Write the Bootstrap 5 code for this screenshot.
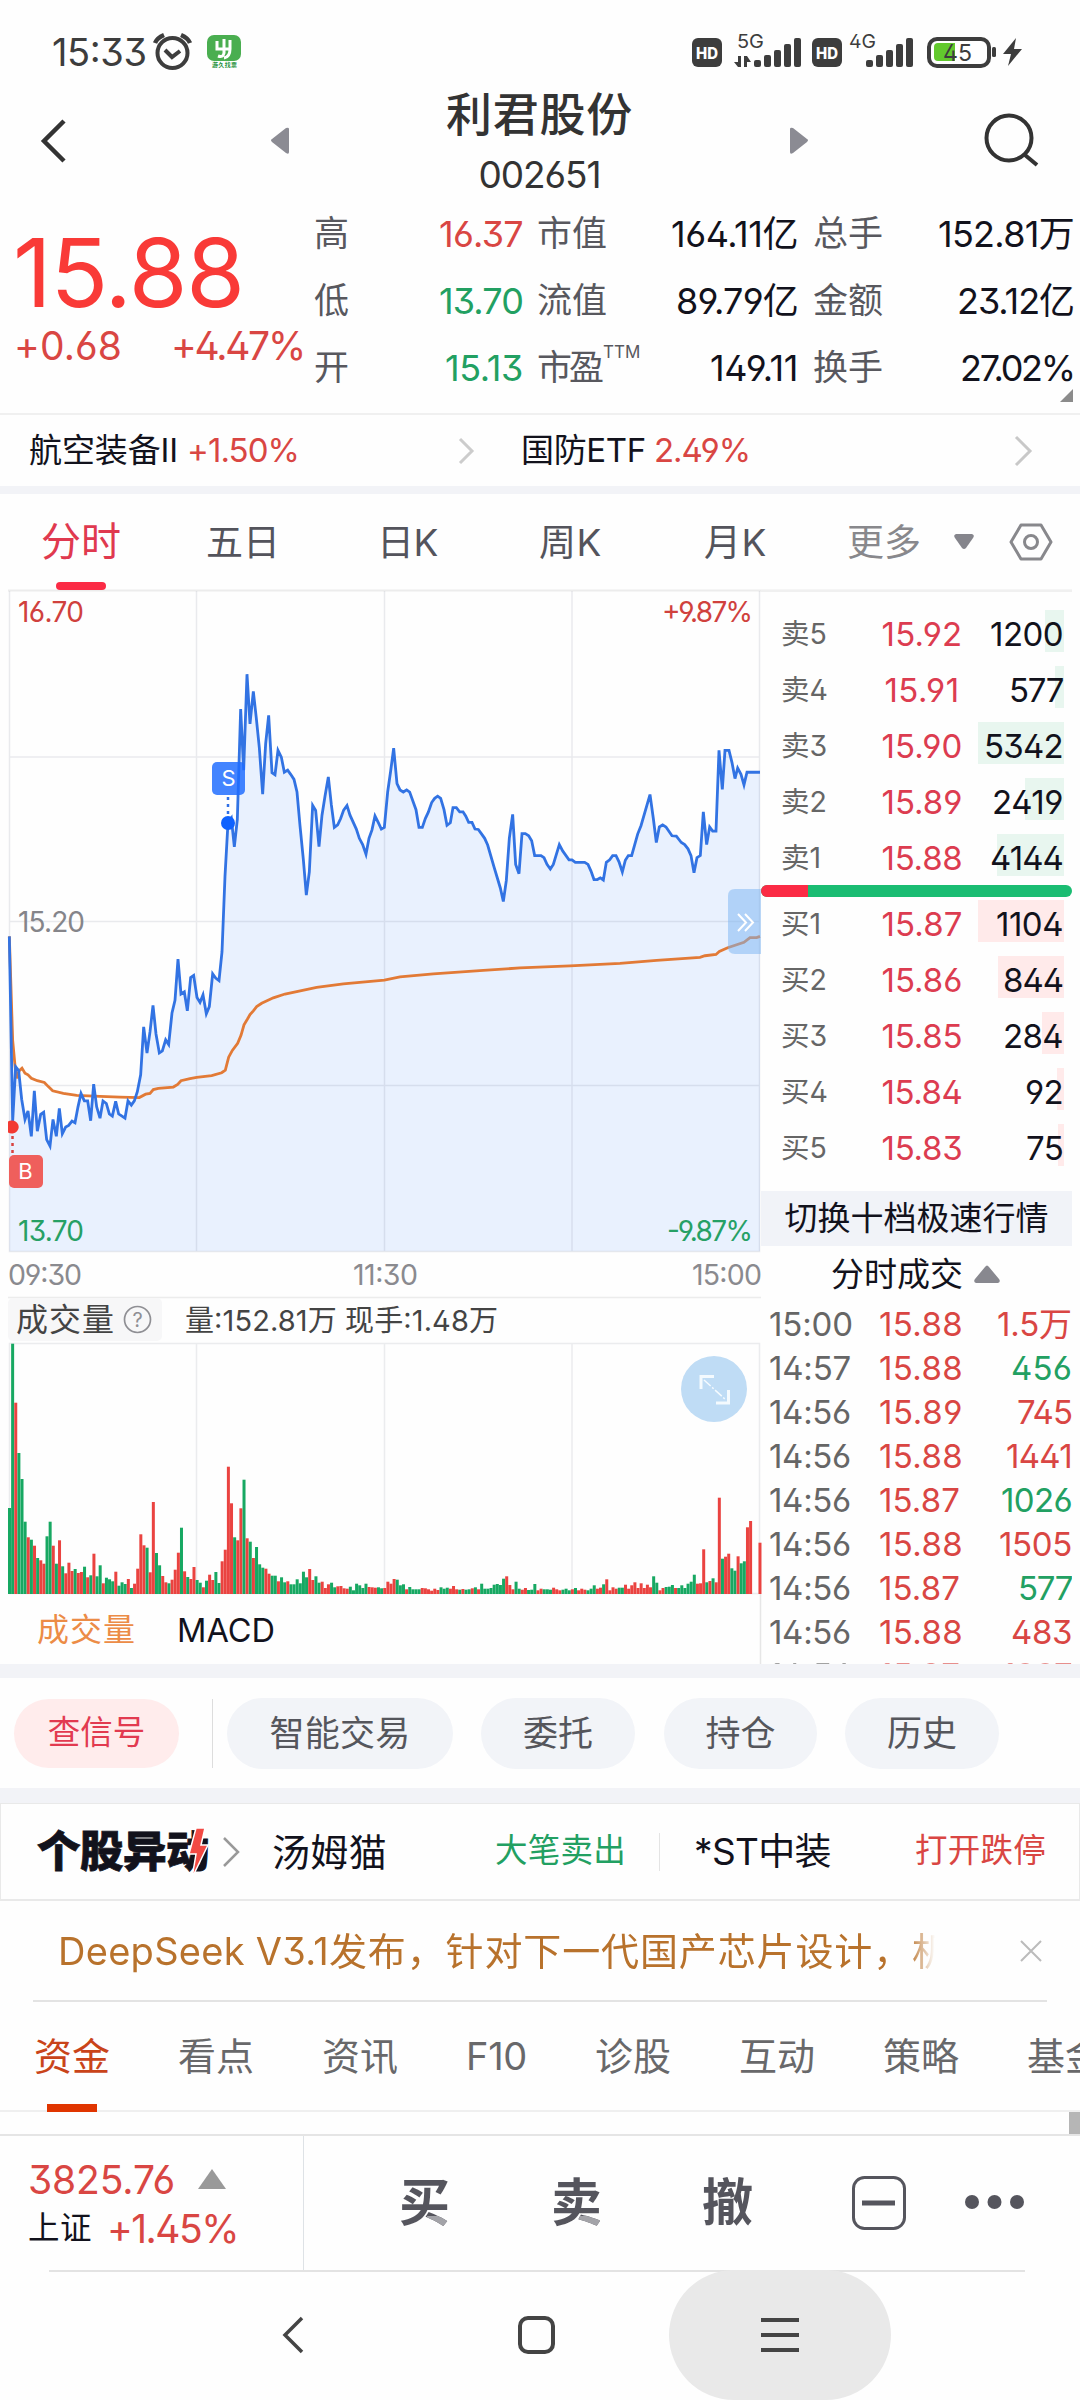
<!DOCTYPE html>
<html lang="zh-CN">
<head>
<meta charset="utf-8">
<meta name="viewport" content="width=device-width, initial-scale=1">
<title>利君股份 002651</title>
<link href="https://cdn.jsdelivr.net/npm/bootstrap@5.3.0/dist/css/bootstrap.min.css" rel="stylesheet">
<style>
:root{--up:#d94643;--down:#22a062;--ink:#12121c;--mut:#58585e;--band:#f2f3f7;--rule:#ebebec}
body{width:1080px;height:2400px;margin:0;overflow:hidden;background:#fefefe;color:var(--ink);font-family:Inter,"Noto Sans CJK SC",sans-serif;font-feature-settings:"ss01";line-height:1}
svg{display:block;overflow:visible}
svg text{font-family:Inter,"Noto Sans CJK SC",sans-serif}
.ft{display:inline-block;white-space:nowrap}
.up{color:var(--up)}.down{color:var(--down)}.mut{color:var(--mut)}
.gridrow{display:grid;align-items:center;white-space:nowrap}
.gap-band{background:var(--band)}
.statusbar{height:85px}
.titlebar{height:115px;grid-template-columns:271px 537px 272px}
.name-lg{font-size:46px;line-height:56px;margin-top:1px}
.code-sm{font-size:37px;line-height:46px;margin-top:10px}
.quote{height:213px;grid-template-columns:314px 766px}
.big-price{font-size:95px;line-height:70px;color:#f93a37}
.chg{font-size:39px;line-height:40px}
.stats{grid-template-columns:209px 14px 261px 15px 261px}
.stat{height:67px;font-size:36px;display:flex;justify-content:space-between;align-items:center}
.stat .lb{font-size:35px;color:var(--mut)}
.ttm{font-size:17px;position:relative;top:-22px;margin-left:2px}
.sector{height:73px;grid-template-columns:29px 158px 270px 64px 133px 359px auto;font-size:33px;border-top:2px solid #f0f0f0}
.kline-tabs{height:96px;font-size:37px;color:#54545c;grid-template-columns:41px 165px 171px 162px 165px 143px 107px 56px auto}
.left-col{width:761px}
.right-col{width:311px;margin-right:8px}
.book-row{height:56px;display:grid;grid-template-columns:20px 88px 106px auto;align-items:center;font-size:33px}
.book-row .side{font-size:28.5px;color:#666;padding-top:7px}
.book-row .px{color:#dc3c50;justify-self:center;padding-top:6px}
.book-row .vol{justify-self:end;height:42px;line-height:48px;padding-right:1px;margin-right:8px;min-width:86px;text-align:right;position:relative}
.book-row .vol i{position:absolute;right:0;top:0;height:42px;z-index:-1}
.vol i.s{background:#e8f6ef}.vol i.b{background:#ffeaea}
.force{height:12px;border-radius:6px;overflow:hidden;background:#1abc72}
.force div{width:47px;background:#fb2b45}
#buy{margin-top:-4px}
.switch{height:55px;margin-top:18px;background:#f1f3f8;font-size:33px}
.tick{height:44px;display:grid;grid-template-columns:8px 110px auto auto;align-items:center;font-size:33px;color:#666}
.tick:last-child{margin-top:-1px;opacity:.6}
.ticks{height:362px;overflow:hidden}
.pill{height:71px;border-radius:36px;background:#f2f4f8;color:#55565c;font-size:35px;display:flex;align-items:center;justify-content:center}
.pill.sig{height:69px;background:#ffecec;color:#e23a50;font-size:32.5px}
.actions{height:110px;grid-template-columns:14px 165px 33px 15px 226px 28px 154px 29px 153px 28px 154px auto}
.movers{height:98px;border:1px solid #e9e9e9;border-bottom-width:2px;grid-template-columns:36px 186px 49px 223px 164px 35px 221px auto}
.movers .logo-word{font-weight:900;font-size:43.5px;color:#12121c;-webkit-text-stroke:.8px #12121c}
.news{height:99px;color:#b8722c;font-size:38px;grid-template-columns:58px 877px 85px auto}
.news .run{overflow:hidden;line-height:60px;-webkit-mask-image:linear-gradient(90deg,#000 97%,transparent)}
.info-tabs{height:110px;font-size:38px;color:#68686a;border-bottom:2px solid #efefef;grid-template-columns:34px 144px 144px 144px 129px 144px 144px 144px auto}
.trade{height:136px;grid-template-columns:304px 95px 152px 151px 150px 113px auto;border-top:2px solid #e5e5e5}
.trade b{justify-self:start;font-size:51px;font-weight:700;line-height:64px;color:#55555d}
.trade b.two{background:linear-gradient(#a3a3a8,#a3a3a8) 100% 100%/46% 29% no-repeat,#55555d;-webkit-background-clip:text;background-clip:text;color:transparent}
.nav-keys{height:130px;grid-template-columns:283px 235px 151px 222px auto}
.nav-rule{left:49px;width:976px;height:2px;top:0;background:#e3e3e3;z-index:-1}
.menu-pill{height:130px;border-radius:65px;background:#e9e9e9}
.ind{position:absolute;height:8px;width:50px}
.scroll-thumb{width:11px;height:22px;background:#b6b6b6}
</style>
<script src="https://cdn.jsdelivr.net/npm/bootstrap@5.3.0/dist/js/bootstrap.bundle.min.js"></script>
</head>
<body>

<header class="statusbar">
<svg width="1080" height="85" viewBox="0 0 1080 85" fill="#3d3d3d">
 <text x="52" y="66" font-size="38" textLength="95">15:33</text>
 <g fill="none" stroke="#3d3d3d" stroke-width="4"><circle cx="172.500" cy="53" r="15"/><path d="M165 50l7 7 8-6" stroke-width="4"/><path d="M155 43q2-5 9-8M190 43q-2-5-9-8" stroke-width="4.500"/></g>
 <rect x="207" y="35" width="34" height="26" rx="7" fill="#4aae50"/><path d="M217 41v8h13M224 39v14q-1 5-6 3M230 40v9q0 8-6 9" fill="none" stroke="#fff" stroke-width="3"/>
 <text x="212" y="67" font-size="6" font-weight="700" fill="#26913a" textLength="25">游久找票</text>
 <rect x="692" y="38" width="30" height="29" rx="6"/><text x="696" y="58.500" font-size="15.500" font-weight="800" fill="#fff" textLength="22" lengthAdjust="spacingAndGlyphs">HD</text>
 <text x="737" y="48" font-size="19" textLength="27" lengthAdjust="spacingAndGlyphs">5G</text>
 <path d="M738 56h3v11h-3l-4-5h4zM744 67h3v-5h4l-4-6h-3z"/>
 <g id="sig"><rect x="754" y="60" width="7" height="7" rx="2"/><rect x="764" y="55" width="7" height="12" rx="2"/><rect x="774" y="50" width="7" height="17" rx="2"/><rect x="784" y="44" width="7" height="23" rx="2"/><rect x="794" y="38" width="7" height="29" rx="2"/></g>
 <rect x="812" y="38" width="30" height="29" rx="6"/><text x="816" y="58.500" font-size="15.500" font-weight="800" fill="#fff" textLength="22" lengthAdjust="spacingAndGlyphs">HD</text>
 <text x="849" y="48" font-size="19" textLength="27" lengthAdjust="spacingAndGlyphs">4G</text>
 <use href="#sig" x="112"/>
 <rect x="929" y="39" width="60" height="27" rx="8" fill="#fff" stroke="#3d3d3d" stroke-width="4"/><path d="M934 47q0-4 4-4h17v18h-17q-4 0-4-4z" fill="#62c92d"/><rect x="992" y="47" width="4" height="10" rx="1.500"/>
 <text x="943" y="61" font-size="23" textLength="29" lengthAdjust="spacingAndGlyphs">45</text>
 <path d="M1016 38l-13 16h8l-3 12 14-17h-8z"/>
</svg>
</header>

<section class="gridrow titlebar">
 <svg width="271" height="115" fill="none" stroke="#333"><path d="M64 36L44 56l20 20" stroke-width="4.500"/></svg>
 <div class="d-flex align-items-start justify-content-between h-100">
  <svg width="18" height="115" fill="#8b8b93"><path d="M18 44v23q0 3-3 1L1 57q-2-2 0-3l14-11q3-1 3 1z"/></svg>
  <div class="d-flex flex-column align-items-center" style="color:#333">
   <div class="name-lg fw-medium ft" data-w="187">利君股份</div>
   <div class="code-sm ft" data-w="122">002651</div>
  </div>
  <svg width="18" height="115" fill="#8b8b93"><path d="M0 44v23q0 3 3 1l14-11q2-2 0-3L3 43q-3-1-3 1z"/></svg>
 </div>
 <svg width="272" height="115" fill="none" stroke="#333" stroke-width="4"><circle cx="201" cy="53" r="22.500"/><path d="M217 70l12 10"/></svg>
</section>

<section class="gridrow quote align-items-start">
 <div style="padding:38px 0 0 13px">
  <div class="big-price"><span class="ft" data-w="231">15.88</span></div>
  <div class="chg up d-flex" style="padding:18px 0 0 1px"><span class="ft" data-w="108">+0.68</span><span class="ft" style="margin-left:49px" data-w="133">+4.47%</span></div>
 </div>
 <div>
  <div class="gridrow stats">
   <div class="stat"><span class="lb">高</span><span class="ft up" data-w="84">16.37</span></div><i></i>
   <div class="stat"><span class="lb">市值</span><span class="ft" data-w="127">164.11亿</span></div><i></i>
   <div class="stat"><span class="lb">总手</span><span class="ft" data-w="136">152.81万</span></div>
   <div class="stat"><span class="lb">低</span><span class="ft down" data-w="84">13.70</span></div><i></i>
   <div class="stat"><span class="lb">流值</span><span class="ft" data-w="122">89.79亿</span></div><i></i>
   <div class="stat"><span class="lb">金额</span><span class="ft" data-w="117">23.12亿</span></div>
   <div class="stat"><span class="lb">开</span><span class="ft down" data-w="78">15.13</span></div><i></i>
   <div class="stat"><span class="lb"><span class="ft" data-w="64">市盈</span><span class="ttm">TTM</span></span><span class="ft" data-w="88">149.11</span></div><i></i>
   <div class="stat"><span class="lb">换手</span><span class="ft" data-w="114">27.02%</span></div>
  </div>
 </div>
</section>
<section class="gridrow sector">
 <i></i><span class="ft" data-w="149">航空装备II</span>
 <span class="ft up" data-w="112">+1.50%</span>
 <svg width="16" height="28" fill="none" stroke="#ccc" stroke-width="3"><path d="M3 2l12 12L3 26"/></svg>
 <span class="ft" data-w="125">国防ETF</span>
 <span class="ft up" data-w="96">2.49%</span>
 <svg width="60" height="32" fill="none" stroke="#c8c8c8" stroke-width="3"><path d="M3 2l14 14L3 30"/><path d="M60-33v-13L47-33z" fill="#8b8b8b" stroke="none"/></svg>
</section>
<div class="gap-band" style="height:8px"></div>

<nav class="gridrow kline-tabs position-relative">
 <i></i><span><span class="ft" style="font-size:40px;color:#e0394f" data-w="80">分时</span></span><span>五日</span><span><span class="ft" data-w="61">日K</span></span><span><span class="ft" data-w="63">周K</span></span><span><span class="ft" data-w="63">月K</span></span><span style="color:#88888c">更多</span>
 <svg width="20" height="18" fill="#85858c"><path d="M2 1h16q3 1 1 4L12 15q-2 2-4 0L1 5Q-1 2 2 1z"/></svg>
 <svg width="42" height="38" fill="none" stroke="#88888c" stroke-width="3"><path d="M11 2h20l10 17-10 17H11L1 19z" stroke-linejoin="round"/><circle cx="21" cy="19" r="6.500"/></svg>
 <div class="ind rounded-pill" style="left:56px;top:88px;background:#fb2b45"></div>
</nav>

<main class="d-flex">
 <div class="left-col">
 <svg width="761" height="1074" viewBox="0 590 761 1074" id="chart">
  <path d="M8 590.500H1072" stroke="#ececec" stroke-width="2"/>
  <g transform="translate(0 590) scale(.33333 .42087)">
   <path id="area" fill="#e9f1fe"/>
  </g>
  <path d="M9.500 591V1251.500H759.500V591M196.500 591V1251M384.500 591V1251M572 591V1251M9 757H760M9 921.500H760M9 1085.500H760" fill="none" stroke="#5a6478" stroke-opacity=".13" stroke-width="1.500"/>
  <g transform="translate(0 590) scale(.33333 .42087)" fill="none" stroke-width="2.800" stroke-linejoin="miter">
   <path id="avg" stroke="#e27a36" vector-effect="non-scaling-stroke"/>
   <path id="price" stroke="#3273e3" vector-effect="non-scaling-stroke"/>
  </g>
  <g font-size="28">
   <text x="18" y="622" fill="#d0413d" textLength="66">16.70</text>
   <text x="18" y="932" fill="#85858a" textLength="67">15.20</text>
   <text x="18" y="1241" fill="#26a065" textLength="66">13.70</text>
   <text x="662" y="622" fill="#d0413d" textLength="91">+9.87%</text>
   <text x="667" y="1241" fill="#26a065" textLength="86">-9.87%</text>
  </g>
  <path d="M228 797V818" stroke="#2f6fe6" stroke-width="2.500" stroke-dasharray="3 4"/><circle cx="228" cy="823" r="7" fill="#0f62fe"/>
  <rect x="212" y="762" width="33" height="33" rx="5" fill="#1f6dff" fill-opacity=".84"/><text x="228.500" y="786" text-anchor="middle" font-size="22" fill="#fff">S</text>
  <path d="M12.500 1136V1156" stroke="#d8423f" stroke-width="2.500" stroke-dasharray="3 4"/><path d="M8 1121.500a7 6.500 0 1 1 0 11z" fill="#f23a33"/>
  <rect x="9" y="1155" width="34" height="33" rx="5" fill="#ef5f5c"/><text x="25.500" y="1179" text-anchor="middle" font-size="22" fill="#fff">B</text>
  <path d="M761 889H735q-7 0-7 7V947q0 7 7 7H761z" fill="#79b4f2" fill-opacity=".5"/>
  <path d="M738 914l8 8.500-8 8.500M745 914l8 8.500-8 8.500" fill="none" stroke="#fff" stroke-width="2"/>
  <g font-size="28.500" fill="#8a8a8f"><text x="8" y="1285" textLength="74">09:30</text><text x="353" y="1285" textLength="65">11:30</text><text x="692" y="1285" textLength="70">15:00</text></g>
  <path d="M8 1297.500H761" stroke="#ececec" stroke-width="1.500"/>
  <rect x="8" y="1298" width="154" height="43" rx="5" fill="#f7f7f8"/>
  <text x="16" y="1331" font-size="32" fill="#444" textLength="98">成交量</text>
  <circle cx="137.500" cy="1319.500" r="13" fill="none" stroke="#8f8f94" stroke-width="1.700"/><text x="137.500" y="1327" text-anchor="middle" font-size="20" fill="#8f8f94">?</text>
  <text x="185" y="1331" font-size="29" fill="#444" textLength="313" xml:space="preserve">量:152.81万 现手:1.48万</text>
  <path d="M9.500 1594V1343.500H759.500V1594M196.500 1343V1594M384.500 1343V1594M572 1343V1594M9 1593.500H760" fill="none" stroke="#ebecee" stroke-width="1.500"/>
  <path d="M760.500 1594V1664" stroke="#e6e6e6" stroke-width="1.500"/>
  <g id="bars"></g>
  <circle cx="714" cy="1389" r="33" fill="#bfdcf5"/><path d="M701 1389V1376.500H714M716 1403H728.500V1390" fill="none" stroke="#f4fafe" stroke-width="3"/><path d="M704 1380L726 1400" stroke="#f4fafe" stroke-width="1.500" stroke-dasharray="9 2 2 2"/>
  <text x="37" y="1641" font-size="32" fill="#ec8c46" textLength="98">成交量</text>
  <text x="177" y="1642" font-size="33" fill="#12121c" textLength="98" lengthAdjust="spacingAndGlyphs">MACD</text>
 </svg>
 </div>
 <div class="right-col">
  <div style="height:13px;border-top:2px solid #f0f0f0"></div>
  <div id="sell"></div>
  <div class="force d-flex" style="margin-top:2px"><div></div></div>
  <div id="buy"></div>
  <div class="switch d-flex align-items-center justify-content-center"><span class="ft" data-w="264">切换十档极速行情</span></div>
  <div class="d-flex align-items-center" style="height:56px;padding-left:70px;font-size:33px"><span class="ft" data-w="132">分时成交</span><svg width="26" height="18" fill="#88888f" style="margin-left:11px"><path d="M2 18q-3-1-1-4L11 2q2-3 4 0l10 12q2 3-1 4z"/></svg></div>
  <div class="ticks" id="ticks"></div>
 </div>
</main>
<div class="gap-band" style="height:14px"></div>

<section class="gridrow actions">
 <i></i><div class="pill sig">查信号</div><i></i><div style="width:1px;height:69px;background:#ddd"></div>
 <div class="pill"><span class="ft" data-w="141">智能交易</span></div><i></i><div class="pill">委托</div><i></i><div class="pill">持仓</div><i></i><div class="pill">历史</div>
</section>
<div class="gap-band" style="height:15px"></div>

<section class="gridrow movers">
 <i></i>
 <div class="position-relative"><span class="ft logo-word" data-w="172">个股异动</span><svg class="position-absolute" style="left:150px;top:-2px" width="22" height="54"><path d="M9 0H18L14 17H21L5 50L9 26H2z" fill="#f24a44" stroke="#fff" stroke-width="1.500"/></svg></div>
 <svg width="18" height="30" fill="none" stroke="#999" stroke-width="2.500"><path d="M1 1l14 14L1 29"/></svg>
 <span style="font-size:38px"><span class="ft" data-w="115">汤姆猫</span></span>
 <span class="down" style="font-size:32.500px"><span class="ft" data-w="131">大笔卖出</span></span>
 <i style="width:1px;height:38px;background:#e4e4e4"></i>
 <span style="font-size:37px"><span class="ft" data-w="137">*ST中装</span></span>
 <span class="up" style="font-size:32.500px"><span class="ft" data-w="131">打开跌停</span></span>
</section>
<section class="gridrow news">
 <i></i><div class="run"><span class="ft" data-w="271">DeepSeek V3.1</span><span class="ft" data-w="622">发布，针对下一代国产芯片设计，机</span></div><i></i>
 <svg width="22" height="22" stroke="#bbb" stroke-width="2"><path d="M1 1l20 20M21 1L1 21"/></svg>
</section>
<div style="height:2px;margin:0 33px;background:#e3e3e3"></div>
<nav class="gridrow info-tabs position-relative">
 <i></i><span style="color:#c9441a">资金</span><span>看点</span><span>资讯</span><span><span class="ft" data-w="61">F10</span></span><span>诊股</span><span>互动</span><span>策略</span><span>基金</span>
 <div class="ind" style="left:47px;top:102px;background:#e03500"></div>
</nav>
<div class="d-flex justify-content-end" style="height:22px"><div class="scroll-thumb"></div></div>

<section class="gridrow trade">
 <div class="h-100 border-end" style="padding:22px 0 0 28px">
  <div class="d-flex align-items-center up" style="font-size:39px;height:42px"><span class="ft" data-w="147">3825.76</span><svg width="28" height="20" fill="#999" style="margin-left:23px"><path d="M14 0l14 20H0z"/></svg></div>
  <div class="d-flex align-items-center" style="height:56px;font-size:31.500px"><span class="ft" data-w="64">上证</span><span class="ft up" style="font-size:39px;margin-left:15px" data-w="131">+1.45%</span></div>
 </div>
 <i></i><b class="two">买</b><b class="two">卖</b><b>撤</b>
 <svg width="54" height="54" fill="none" stroke="#55555d"><rect x="1.500" y="1.500" width="51" height="51" rx="11" stroke-width="3"/><path d="M10 27H43" stroke-width="5"/></svg>
 <svg width="60" height="16" fill="#55555d"><circle cx="7" cy="7" r="7"/><circle cx="29.500" cy="7" r="7"/><circle cx="52" cy="7" r="7"/></svg>
</section>
<section class="gridrow nav-keys position-relative">
 <div class="position-absolute nav-rule"></div>
 <i></i><svg width="22" height="36" fill="none" stroke="#444" stroke-width="3.500"><path d="M19 1L2 18l17 17"/></svg>
 <svg width="38" height="38" fill="none" stroke="#444" stroke-width="4"><rect x="2" y="2" width="33" height="34" rx="8"/></svg>
 <div class="menu-pill d-flex align-items-center justify-content-center"><svg width="38" height="36" stroke="#444" stroke-width="3.800"><path d="M0 3H38M0 18H38M0 33H38"/></svg></div>
</section>

<script>
// Minute price line and average line, in chart units.
const price="28,823 38,1262 47,1133 56,1142 65,1210 75,1258 84,1238 94,1298 103,1190 112,1286 122,1246 131,1241 140,1306 150,1321 159,1258 169,1298 178,1232 187,1292 197,1276 206,1272 216,1262 225,1266 234,1228 243,1196 253,1214 263,1214 272,1261 281,1174 290,1228 300,1255 309,1214 319,1220 328,1245 337,1250 347,1215 356,1245 366,1250 375,1255 384,1214 394,1224 403,1214 412,1192 422,1152 431,1038 441,1100 450,1050 459,987 468,1055 478,1100 487,1095 497,1069 506,1080 516,1005 525,975 534,877 543,960 553,955 562,1000 572,921 581,916 591,968 600,980 609,962 619,1007 628,990 638,912 647,922 657,928 666,860 675,680 684,553 694,542 703,610 712,545 722,283 731,428 741,200 750,318 760,241 769,305 778,375 788,485 797,365 806,298 816,434 825,439 834,381 844,397 853,433 863,428 872,438 882,450 891,480 900,560 910,640 919,725 928,670 938,512 947,524 957,610 966,535 975,490 985,444 994,510 1003,564 1013,558 1022,543 1031,523 1041,512 1050,535 1069,568 1078,590 1088,605 1098,628 1107,590 1116,570 1125,537 1135,553 1144,568 1153,564 1163,480 1172,430 1181,376 1191,460 1200,475 1210,480 1220,475 1229,480 1248,522 1257,564 1267,564 1276,543 1285,528 1295,505 1304,495 1313,490 1322,495 1332,522 1341,559 1351,553 1359,517 1369,517 1379,527 1389,527 1397,537 1406,552 1416,552 1425,568 1435,569 1444,579 1454,590 1463,606 1482,658 1501,708 1510,740 1519,690 1528,590 1538,533 1547,652 1557,674 1566,579 1576,579 1586,584 1595,596 1604,631 1623,631 1632,636 1641,652 1651,663 1660,652 1678,605 1688,620 1707,641 1716,641 1726,647 1754,647 1764,652 1773,668 1782,688 1792,688 1801,684 1810,689 1819,647 1829,641 1838,631 1848,631 1857,646 1867,670 1876,642 1885,631 1895,631 1913,580 1923,560 1950,486 1960,543 1969,600 1978,563 1988,558 1998,563 2016,584 2029,585 2044,600 2054,605 2064,615 2073,631 2082,672 2091,636 2101,631 2110,527 2120,605 2129,563 2138,573 2148,573 2157,381 2167,474 2175,381 2187,381 2196,410 2205,448 2213,423 2223,438 2232,463 2241,433 2280,433";
const avg="28,823 38,1070 45,1130 50,1160 58,1142 66,1136 75,1148 84,1152 94,1160 112,1166 133,1170 145,1180 158,1190 190,1196 230,1201 300,1203 360,1205 418,1206 437,1198 450,1196 460,1187 475,1184 520,1181 533,1175 543,1166 570,1161 590,1158 635,1154 665,1147 676,1141 686,1110 697,1094 713,1077 723,1058 732,1033 742,1020 750,1009 760,1000 770,990 785,982 820,969 855,960 950,944 1030,936 1153,927 1200,919 1300,912 1450,904 1560,898 1710,893 1860,887 1970,880 2100,873 2115,869 2148,866 2158,859 2183,850 2232,837 2250,826 2270,826 2280,823";
document.getElementById('price').setAttribute('d','M'+price);
document.getElementById('avg').setAttribute('d','M'+avg);
document.getElementById('area').setAttribute('d','M28,1571 '+price+' 2280,1571z');

// Volume per minute: height in thirds of a pixel, g = falling, r = rising.
const vols="258g 751g 574r 423g 345g 217g 170r 163g 145r 108g 101r 91r 173g 217g 145r 91g 161r 83g 62r 94r 69r 75g 63r 66r 82g 50r 56g 121r 53g 86g 32r 49g 44g 38g 67r 25g 35g 30g 45r 18g 31r 76r 179r 146r 139g 65r 276r 123g 86g 54r 35r 32g 43r 73r 124r 199g 68r 51g 45r 81r 42g 34g 20r 40g 58r 42r 66g 33g 98r 133r 382r 272r 170g 161r 257r 343g 167r 157g 108r 141g 89g 79g 76r 61r 55g 55g 38r 50g 35g 38r 29g 29g 44g 32g 67g 50g 75r 42r 53g 34g 37r 18r 29r 34g 20g 23r 24r 17r 16r 22g 11g 31g 26g 18g 31g 21r 20r 19r 20g 17g 18r 37r 31r 45r 43g 26g 29g 14r 21g 14g 14g 14g 18r 17r 14r 10r 16r 12r 20g 16g 19g 16r 24r 14r 13g 15r 13g 14g 17r 20g 14r 31g 16g 16g 18g 28g 30g 27g 46g 53r 27r 14r 37g 16g 13r 18r 12g 13g 30g 11r 16r 14g 14g 13g 19r 14r 11r 13g 16g 11g 14r 18g 11r 16r 13r 11g 16g 26g 16r 19r 29g 44r 11r 20r 16r 19g 19g 28r 16r 26r 35r 18r 32r 18r 28r 20r 53g 34g 11r 18r 21g 22g 27g 18r 18g 26g 18g 31g 37g 58g 31r 32r 134r 35g 39r 47g 35r 289r 106g 112r 121r 77g 70g 113r 92g 98g 200r 219r 0r 0r 154r".split(' ');
document.getElementById('bars').innerHTML=vols.map((v,k)=>{const h=parseInt(v)/3,x=8+k*3.127;
 return `<rect x="${x.toFixed(2)}" y="${(1594-h).toFixed(1)}" width="3" height="${h.toFixed(1)}" fill="${v.endsWith('g')?'#17a862':'#ea4340'}"/>`}).join('');

const book=(id,rows,side,cls)=>document.getElementById(id).innerHTML=rows.map(([n,p,v,w,t])=>
 `<div class="book-row"><i></i><span class="side">${side}${n}</span><span class="px"><span class="ft" data-w="${p=='15.91'?75:81}">${p}</span></span><span class="vol"><i class="${cls}" style="width:${w}px"></i><span class="ft" data-w="${t}">${v}</span></span></div>`).join('');
book('sell',[[5,'15.92',1200,19,73],[4,'15.91',577,9,54],[3,'15.90',5342,86,79],[2,'15.89',2419,39,71],[1,'15.88',4144,67,73]],'卖','s');
book('buy',[[1,'15.87',1104,86,67],[2,'15.86',844,66,60],[3,'15.85',284,22,60],[4,'15.84',92,7,38],[5,'15.83',75,6,37]],'买','b');

document.getElementById('ticks').innerHTML=[['15:00','15.88','1.5万',75,'up'],['14:57','15.88','456',61,'down'],['14:56','15.89','745',55,'up'],['14:56','15.88','1441',66,'up'],['14:56','15.87','1026',71,'down'],['14:56','15.88','1505',73,'up'],['14:56','15.87','577',54,'down'],['14:56','15.88','483',61,'up'],['14:56','15.87','1007',70,'up']]
 .map(([t,p,v,w,c])=>`<div class="tick"><i></i><span><span class="ft" data-w="${t=='15:00'?84:82}">${t}</span></span><span class="up"><span class="ft" data-w="${p=='15.87'?81:84}">${p}</span></span><span class="${c} text-end"><span class="ft" data-w="${w}">${v}</span></span></div>`).join('');

document.querySelectorAll('[data-w]').forEach(e=>{
 const r=document.createRange();r.selectNodeContents(e);
 const n=[...e.textContent].length;
 e.style.letterSpacing=((+e.dataset.w-r.getBoundingClientRect().width)/n).toFixed(3)+'px';
});
</script>
</body>
</html>
